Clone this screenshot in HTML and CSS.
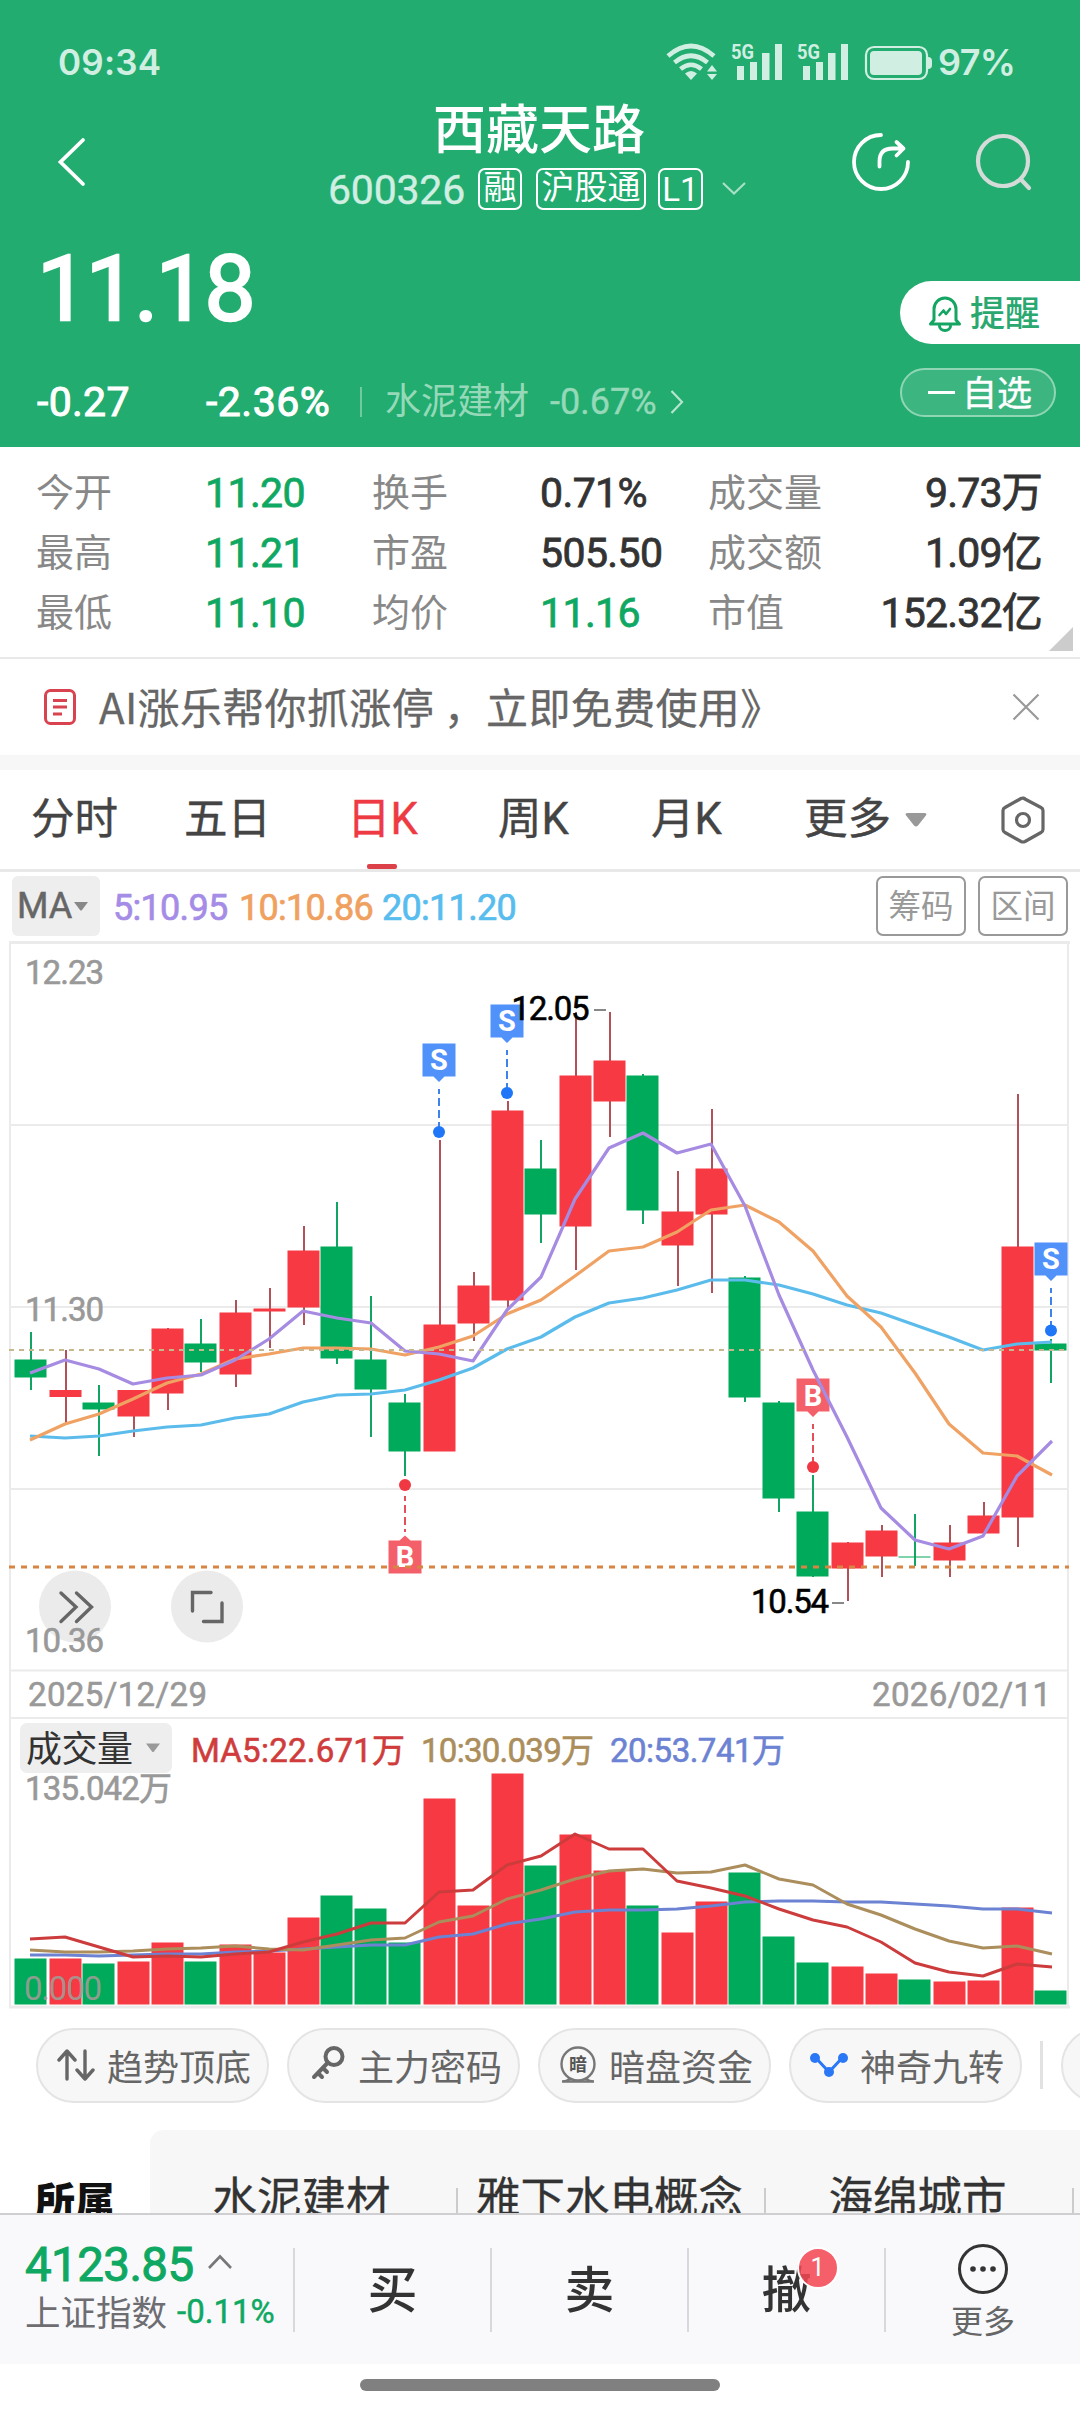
FILE: index.html
```html
<!DOCTYPE html>
<html lang="zh-CN">
<head>
<meta charset="utf-8">
<title>西藏天路 600326</title>
<link rel="stylesheet" href="styles.css">
</head>
<body>
<div class="app">
  <header class="hero">
    <div class="status">
      <span class="clock">09:34</span>
      <svg class="status-icons" width="270" height="44" viewBox="664 40 270 44">
        <g fill="none" stroke="#d0efe2" stroke-width="4.6">
          <path d="M668 56Q691 36 714 56"/><path d="M674.500 62.500Q691 49 707.500 62.500"/><path d="M680.500 69Q691 60.500 701.500 69"/>
        </g>
        <g fill="#d0efe2">
          <path d="M685 73.500Q691 68.500 697 73.500L691 80z"/>
          <path d="M707 71.500l5-6.500 5 6.500zM707 74h10l-5 6z"/>
          <path d="M737 66h7v14h-7zM750 62h7v18h-7zM762 53h7.500v27h-7.500zM775 44h7v36h-7z"/>
          <path d="M803 66h7v14h-7zM816 62h7v18h-7zM828 53h7.500v27h-7.500zM841 44h7v36h-7z"/>
          <rect x="870" y="51" width="52" height="24" rx="4"/>
          <path d="M928 57q4 0 4 4v4q0 4-4 4z"/>
          <text x="731" y="58.500" class="fiveg" textLength="23" lengthAdjust="spacingAndGlyphs">5G</text>
          <text x="797" y="58.500" class="fiveg" textLength="23" lengthAdjust="spacingAndGlyphs">5G</text>
        </g>
        <rect x="866" y="47" width="61" height="32" rx="8" fill="none" stroke="#d0efe2" stroke-width="2.200"/>
      </svg>
      <span class="battery">97%</span>
    </div>
    <div class="nav">
      <svg class="back" width="32" height="52" viewBox="56 136 32 52"><path d="M83 140L60.500 162 83 184" fill="none" stroke="#fff" stroke-width="3.800" stroke-linecap="round"/></svg>
      <div class="title-box">
        <h1>西藏天路</h1>
        <div class="code-row">
          <span class="code">600326</span><span class="tag t1">融</span><span class="tag t3">沪股通</span><span class="tag t2">L1</span>
          <svg width="26" height="16" viewBox="0 0 26 16"><path d="M2 2l11 10.500L24 2" fill="none" stroke="#a8e0c8" stroke-width="2.200"/></svg>
        </div>
      </div>
      <div class="nav-actions">
        <svg width="60" height="60" viewBox="851 132 60 60" fill="none" stroke="#fff" stroke-width="3.800" stroke-linecap="round" stroke-linejoin="round"><path d="M881 135A27 27 0 1 0 908 162"/><path d="M879.500 166.500v-5q0-13 13-13h11M896.500 142l7 6.500-7 7"/></svg>
        <svg width="60" height="60" viewBox="973 132 60 60" fill="none" stroke="#d4dbd8" stroke-width="4.200" stroke-linecap="round"><circle cx="1003" cy="161" r="25"/><path d="M1021 179.500l8 8.500"/></svg>
      </div>
    </div>
    <div class="quote">
      <div class="price">11.18</div>
      <div class="remind">
        <svg width="34" height="38" viewBox="0 0 34 38" fill="none" stroke="#15a562" stroke-width="3" stroke-linecap="round" stroke-linejoin="round"><path d="M6 26V15a11 11 0 0 1 22 0v11l3.500 4h-29z"/><path d="M11.500 32a5.500 4.500 0 0 0 11 0"/><path d="M11.500 21l4-4.500 2.500 3.500 4-5" stroke-width="2.600"/></svg>
        <span>提醒</span>
      </div>
    </div>
    <div class="change">
      <span class="diff">-0.27</span><span class="pct">-2.36%</span><i class="bar"></i>
      <span class="sector">水泥建材</span><span class="sector-pct">-0.67%</span>
      <svg width="16" height="26" viewBox="0 0 16 26"><path d="M2.500 2l10.500 11L2.500 24" fill="none" stroke="#b5e4cf" stroke-width="2.200"/></svg>
      <div class="fav"><i></i><span>自选</span></div>
    </div>
  </header>

  <section class="stats">
    <span>今开</span><b class="g">11.20</b><span>换手</span><b>0.71%</b><span>成交量</span><b class="r">9.73万</b>
    <span>最高</span><b class="g">11.21</b><span>市盈</span><b>505.50</b><span>成交额</span><b class="r">1.09亿</b>
    <span>最低</span><b class="g">11.10</b><span>均价</span><b class="g">11.16</b><span>市值</span><b class="r">152.32亿</b>
    <svg class="corner" width="24" height="24"><path d="M24 0v24H0z" fill="#ccc"/></svg>
  </section>

  <section class="notice">
    <svg width="34" height="38" viewBox="43 688 34 38" fill="none" stroke="#d8434f" stroke-width="3"><rect x="45.500" y="690.500" width="29" height="33" rx="5"/><path d="M53 700.500h14M53 707h14M53 714h9" stroke-width="3.200"/></svg>
    <span>AI涨乐帮你抓涨停 ，立即免费使用》</span>
    <svg class="close" width="28" height="28" viewBox="0 0 28 28"><path d="M1.500 1.500l25 25M26.500 1.500l-25 25" stroke="#999" stroke-width="2.200"/></svg>
  </section>

  <nav class="tabs">
    <span>分时</span><span>五日</span><span class="on">日K</span><span>周K</span><span>月K</span><span class="more">更多<svg width="22" height="14"><path d="M3 0h16q4 0 1.500 3L13 12.500q-2 2-4 0L1.500 3Q-1 0 3 0z" fill="#999"/></svg></span>
    <svg class="hex" width="46" height="50" viewBox="0 0 46 50" fill="none" stroke="#666" stroke-width="3.200" stroke-linejoin="round"><path d="M23 3L41 12.500q2 1 2 3v19q0 2-2 3L25 46.500q-2 1-4 0L5 37.500q-2-1-2-3v-19q0-2 2-3L21 3.500q2-1 4 0"/><circle cx="23" cy="25" r="6.500"/></svg>
  </nav>

  <section class="ma">
    <span class="ma-pill">MA<svg width="14" height="9"><path d="M0 0h14L8 8q-1 1-2 0z" fill="#888"/></svg></span>
    <span class="m5">5:10.95</span><span class="m10">10:10.86</span><span class="m20">20:11.20</span>
    <button>筹码</button><button>区间</button>
  </section>

  <svg class="chart" width="1080" height="1076" viewBox="0 940 1080 1076">
    <!-- frame and grid -->
    <g fill="#ebebeb">
      <path d="M9 941h1061v3H9zM9 1124h1059v2H9zM9 1306h1059v2H9zM9 1488h1059v2H9zM9 1669.500h1059v2H9zM9 1717h1059v2H9zM9 2005.500h1061v3H9z"/>
      <path d="M9 941h2v1067H9zM1067 941h2v1067h-2z"/>
    </g>
    <!-- price axis and round buttons -->
    <g fill="#ebebeb"><circle cx="75" cy="1606.500" r="36"/><circle cx="207" cy="1606.500" r="36"/></g>
    <g fill="none" stroke="#666" stroke-width="3.400" stroke-linecap="round">
      <path d="M61 1593l15 14-15 14.500M76.500 1593l15 14-15 14.500"/>
      <path d="M192.500 1611v-18.500H211M222 1603v18.500h-18.500"/>
    </g>
    <g class="axis" fill="#999" stroke="#999">
      <text x="25" y="984" textLength="79">12.23</text>
      <text x="25" y="1321" textLength="79">11.30</text>
      <text x="25" y="1652" textLength="79">10.36</text>
      <text x="28" y="1706" textLength="179">2025/12/29</text>
      <text x="872" y="1706" textLength="179">2026/02/11</text>
    </g>
    <!-- wicks -->
    <path stroke="#b05257" stroke-width="2" d="M66 1350v75M134 1390v47M168 1328v82M236 1300v87M270 1288v60M304 1226v99M440 1140v190M474 1272v69M508 1101v208M576 1012v258M610 1012v125M678 1171v115M712 1109v184M848 1542v59M882 1525v52M950 1525v52M984 1502v31M1018 1094v453"/>
    <path stroke="#12a462" stroke-width="2" d="M31 1332v58M99 1385v71M201 1319v53M337 1202v162M371 1296v141M405 1394v82M541 1140v103M643 1074v150M779 1401v111M745 1276v126M813 1475v102M915 1514v52M1051 1339v44"/>
    <!-- candle bodies -->
    <path fill="#f63942" d="M49.500 1390h32v7h-32zM117.500 1390h32v26.500h-32zM151.500 1328.500h32v65h-32zM219.500 1312.500h32v62h-32zM253.500 1308.500h32v3h-32zM287.500 1250.500h32v57h-32zM423.500 1324.500h32v127h-32zM457.500 1285.500h32v38h-32zM491.500 1110.500h32v190h-32zM559.500 1075.500h32v151h-32zM593.500 1060.500h32v41h-32zM661.500 1211.500h32v34h-32zM695.500 1168.500h32v46h-32zM831.500 1542.500h32v26h-32zM865.500 1530.500h32v26h-32zM933.500 1542.500h32v18h-32zM967.500 1515.500h32v18h-32zM1001.500 1246.500h32v271h-32z"/>
    <path fill="#00aa5b" d="M14.500 1359.500h32v18h-32zM82.500 1402.500h32v7h-32zM184.500 1343.500h32v19h-32zM320.500 1246.500h32v112h-32zM354.500 1359.500h32v30h-32zM388.500 1402.500h32v49h-32zM524.500 1168.500h32v46h-32zM626.500 1075.500h32v135h-32zM728.500 1277.500h32v120h-32zM762.500 1402.500h32v96h-32zM796.500 1511.500h32v65h-32zM898.500 1556.500h32v1h-32zM1034.500 1343.500h32v7h-32z"/>
    <!-- trade markers -->
    <g fill="#5191fa">
      <path d="M422.500 1043.500h33v33h-11l-5.500 5.500-5.500-5.500h-11zM490.500 1004.500h33v33h-11l-5.500 5.500-5.500-5.500h-11zM1034.500 1242.500h33v33h-11l-5.500 5.500-5.500-5.500h-11z"/>
    </g>
    <g fill="#f46069"><path d="M388.500 1540.500h11l5.500-5 5.500 5h11v33h-33zM796.500 1378.500h33v33h-11l-5.500 5.500-5.500-5.500h-11z"/></g>
    <g class="mark" fill="#fff" text-anchor="middle">
      <text x="439" y="1070">S</text><text x="507" y="1031">S</text><text x="1051" y="1269">S</text><text x="405" y="1567">B</text><text x="813" y="1405.500">B</text>
    </g>
    <g fill="none" stroke-width="2" stroke-dasharray="8 4" stroke-dashoffset="3">
      <path stroke="#3f82ea" d="M439 1089v38M507 1050v38M1051 1288v38"/>
      <path stroke="#e2505c" d="M405 1496v36M813 1424v38"/>
    </g>
    <g fill="#1f76f7"><circle cx="439" cy="1132" r="6"/><circle cx="507" cy="1093" r="6"/><circle cx="1051" cy="1330.500" r="6"/></g>
    <g fill="#f03843"><circle cx="405" cy="1485" r="6"/><circle cx="813" cy="1467" r="6"/></g>
    <!-- price averages -->
    <g fill="none" stroke-width="3.200" stroke-linejoin="round">
      <path stroke="#5bbcec" d="M30 1436L65 1438 99 1436 133 1431 167 1427 201 1425 235 1418 269 1414 303 1402 337 1395 371 1394 405 1390 439 1380 473 1368 507 1349 541 1337 575 1317 609 1303 643 1298 677 1290 711 1280 745 1280 779 1285 813 1294 847 1305 881 1313 915 1325 949 1337 983 1350 1017 1344 1052 1342"/>
      <path stroke="#efa263" d="M30 1440L65 1424 99 1414 133 1399 167 1383 201 1374 235 1359 269 1354 303 1348 337 1348 371 1349 405 1355 439 1347 473 1336 507 1314 541 1300 575 1276 609 1251 643 1247 677 1232 711 1210 745 1205 779 1222 813 1251 847 1296 881 1327 915 1373 949 1424 983 1453 1017 1456 1052 1475"/>
      <path stroke="#a68be2" d="M30 1373L65 1360 99 1369 133 1384 167 1378 201 1375 235 1360 269 1339 303 1311 337 1318 371 1323 405 1351 439 1354 473 1361 507 1310 541 1277 575 1199 609 1148 643 1133 677 1153 711 1144 745 1206 779 1295 813 1370 847 1437 881 1508 915 1540 949 1549 983 1536 1017 1476 1052 1441"/>
    </g>
    <path stroke="#c6b78e" stroke-width="2" stroke-dasharray="5 5" d="M9 1350H1069"/>
    <path stroke="#d88443" stroke-width="3" stroke-dasharray="6 6" d="M9 1567H1069"/>
    <path stroke="#888" stroke-width="2" d="M594 1010h12M832 1603h12"/>
    <g class="axis" fill="#000" stroke="#000"><text x="511.500" y="1020" textLength="78">12.05</text><text x="751" y="1613" textLength="78">10.54</text></g>
    <!-- volume -->
    <path fill="#f63942" d="M49.500 1958.500h32v46h-32zM117.500 1961.500h32v43h-32zM151.500 1942.500h32v62h-32zM219.500 1944.500h32v60h-32zM253.500 1952.500h32v52h-32zM287.500 1917.500h32v87h-32zM423.500 1798.500h32v206h-32zM457.500 1905.500h32v99h-32zM491.500 1773.500h32v231h-32zM559.500 1834.500h32v170h-32zM593.500 1870.500h32v134h-32zM661.500 1932.500h32v72h-32zM695.500 1901.500h32v103h-32zM831.500 1966.500h32v38h-32zM865.500 1973.500h32v31h-32zM933.500 1981.500h32v23h-32zM967.500 1980.500h32v24h-32zM1001.500 1907.500h32v97h-32z"/>
    <path fill="#00aa5b" d="M14.500 1958.500h32v46h-32zM82.500 1963.500h32v41h-32zM184.500 1961.500h32v43h-32zM320.500 1895.500h32v109h-32zM354.500 1908.500h32v96h-32zM388.500 1942.500h32v62h-32zM524.500 1865.500h32v139h-32zM626.500 1905.500h32v99h-32zM728.500 1872.500h32v132h-32zM762.500 1936.500h32v68h-32zM796.500 1962.500h32v42h-32zM898.500 1979.500h32v25h-32zM1034.500 1990.500h32v14h-32z"/>
    <g fill="none" stroke-width="3" stroke-linejoin="round">
      <path stroke="#6c82d2" d="M30 1955L65 1955 99 1956 133 1955 167 1954 201 1954 235 1952 269 1951 303 1949 337 1947 371 1945 405 1945 439 1937 473 1934 507 1924 541 1919 575 1912 609 1910 643 1910 677 1909 711 1906 745 1902 779 1901 813 1901 847 1902 881 1902 915 1904 949 1906 983 1909 1017 1909 1052 1913"/>
      <path stroke="#ab8e5c" d="M30 1950L65 1952 99 1952 133 1951 167 1949 201 1948 235 1946 269 1949 303 1950 337 1945 371 1940 405 1938 439 1922 473 1916 507 1899 541 1890 575 1879 609 1871 643 1869 677 1873 711 1872 745 1865 779 1879 813 1885 847 1904 881 1915 915 1929 949 1941 983 1948 1017 1946 1052 1954"/>
      <path stroke="#cc3c3c" d="M30 1939L65 1937 99 1947 133 1957 167 1956 201 1957 235 1954 269 1952 303 1942 337 1934 371 1923 405 1923 439 1892 473 1890 507 1865 541 1856 575 1834 609 1849 643 1849 677 1881 711 1888 745 1896 779 1909 813 1920 847 1927 881 1942 915 1963 949 1972 983 1976 1017 1964 1052 1967"/>
    </g>
    <rect x="20" y="1723" width="152" height="50" rx="7" fill="#eee"/>
    <text x="26" y="1761.500" class="vol-name" fill="#333" textLength="107">成交量</text>
    <path d="M146 1743.500h14l-6 8q-1 1-2 0z" fill="#999"/>
    <g class="axis">
      <text x="191" y="1761.500" fill="#d03c3c" stroke="#d03c3c" textLength="214">MA5:22.671万</text>
      <text x="421" y="1761.500" fill="#ab8e5c" stroke="#ab8e5c" textLength="173">10:30.039万</text>
      <text x="610" y="1761.500" fill="#6c82d2" stroke="#6c82d2" textLength="175">20:53.741万</text>
      <text x="25" y="1799.500" fill="#999" stroke="#999" textLength="147">135.042万</text>
      <text x="24" y="1999.500" fill="#a09c96" fill-opacity=".9" textLength="78">0.000</text>
    </g>
  </svg>

  <section class="chips">
    <span class="chip"><svg width="38" height="32" viewBox="0 0 38 32" fill="none" stroke="#666" stroke-width="3.400" stroke-linecap="round" stroke-linejoin="round"><path d="M10 30V3M2 11l8-9 8 9M28 2v28M20 21l8 9 8-9"/></svg>趋势顶底</span>
    <span class="chip"><svg class="key" width="38" height="36" viewBox="0 0 38 36" fill="none" stroke="#666" stroke-width="4" stroke-linecap="round"><circle cx="26" cy="11.500" r="8.500"/><path d="M19.500 18L6 32M10 28l4 4M15 23l4 4"/></svg>主力密码</span>
    <span class="chip"><svg width="38" height="40" viewBox="0 0 38 40" fill="none" stroke="#777" stroke-width="2.400"><circle cx="19" cy="19" r="16.500"/><path d="M3 36.500q5 0 8-3M35 36.500q-5 0-8-3M3 36.500h32"/><text x="19" y="26" text-anchor="middle" class="dark" fill="#555" stroke="none">暗</text></svg>暗盘资金</span>
    <span class="chip"><svg width="38" height="26" viewBox="0 0 38 26"><path d="M5 5l14 15L33 5" fill="none" stroke="#2a78f5" stroke-width="3"/><g fill="#2a78f5"><circle cx="5" cy="6" r="5"/><circle cx="19" cy="20" r="5"/><circle cx="33" cy="6" r="5"/></g></svg>神奇九转</span>
    <i></i>
    <span class="chip cut"></span>
  </section>

  <section class="belong">
    <b>所属</b>
    <div class="belong-list"><span class="c1">水泥建材</span><span class="c2">雅下水电概念</span><span class="c3">海绵城市</span></div>
  </section>

  <footer class="dock">
    <div class="index">
      <div class="idx-top">4123.85<svg width="26" height="16" viewBox="0 0 26 16"><path d="M2 14L13 2.500 24 14" fill="none" stroke="#777" stroke-width="2.600"/></svg></div>
      <div class="idx-sub"><span>上证指数</span><em>-0.11%</em></div>
    </div>
    <div class="act">买</div>
    <div class="act">卖</div>
    <div class="act"><span class="wd">撤<i class="badge">1</i></span></div>
    <div class="act-more">
      <svg width="52" height="52" viewBox="0 0 52 52"><circle cx="26" cy="26" r="23.500" fill="none" stroke="#333" stroke-width="3"/><g fill="#333"><circle cx="16" cy="26" r="2.800"/><circle cx="26" cy="26" r="2.800"/><circle cx="36" cy="26" r="2.800"/></g></svg>
      <span>更多</span>
    </div>
  </footer>
  <div class="home"><i></i></div>
</div>
</body>
</html>
```
FILE: styles.css
```css
* { box-sizing: border-box; }
body { margin: 0; background: #fff; }
.app {
  width: 1080px; height: 2412px; overflow: hidden;
  display: flex; flex-direction: column;
  font-family: Roboto, "Noto Sans CJK SC", sans-serif;
  color: #333; background: #fff;
}
.app > * { flex: none; }
svg { display: block; flex: none; }

/* header */
.hero { height: 447px; background: #22ac6f; color: #fff; display: flex; flex-direction: column; }
.status { height: 90px; padding: 40px 0 0 58px; display: flex; align-items: flex-start; color: #d0efe2; font: 600 35px/44px Inter, sans-serif; }
.clock { width: 606px; letter-spacing: .2px; }
.battery { padding-left: 4px; letter-spacing: -.6px; font-size: 36px; }
.fiveg { font: 700 20px Roboto, sans-serif; }
.nav { height: 130px; display: flex; position: relative; }
.back { margin: 46px 0 0 56px; }
.title-box { width: 440px; margin-left: 232px; display: flex; flex-direction: column; }
.title-box h1 { margin: 6px 0 0 113px; font: 500 53px/60px "Noto Sans CJK SC", sans-serif; white-space: nowrap; }
.code-row { display: flex; align-items: center; height: 42px; margin: 12px 0 0 8px; }
.code { width: 150px; font-size: 41px; line-height: 42px; color: #d0efe2; letter-spacing: -.2px; -webkit-text-stroke: .4px #d0efe2; padding-top: 2px; }
.tag { height: 42px; border: 2px solid #fff; border-radius: 7px; font: 400 33px/35px Roboto, "Noto Sans CJK SC", sans-serif; text-align: center; }
.t1 { width: 44px; }
.t3 { width: 110px; margin-left: 14px; }
.t2 { width: 45px; margin: 0 18px 0 12px; line-height: 40px; }
.nav-actions { display: flex; gap: 62px; margin: 42px 0 0 91px; }
.quote { height: 148px; display: flex; justify-content: space-between; }
.price { padding: 19px 0 0 37px; font: 400 91px/100px Roboto, sans-serif; letter-spacing: -2.5px; -webkit-text-stroke: 2.4px #fff; }
.remind { margin-top: 61px; width: 180px; height: 63px; background: #fff; border-radius: 32px 0 0 32px; padding-left: 28px; display: flex; align-items: center; gap: 8px; color: #2aa870; font: 500 35px/50px "Noto Sans CJK SC", sans-serif; }
.remind span { margin-top: -4px; }
.change { height: 49px; display: flex; align-items: center; padding-left: 37px; line-height: 49px; }
.diff, .pct { font-size: 41px; font-weight: 400; padding-top: 20px; -webkit-text-stroke: 1px #fff; }
.diff { width: 169px; letter-spacing: .3px; }
.pct { width: 154px; letter-spacing: .5px; }
.bar { width: 2px; height: 30px; margin-top: 19px; background: #6fcaa0; }
.sector { margin-left: 23px; width: 165px; padding-top: 19px; font-size: 36px; color: #95d9b9; }
.sector-pct { width: 119px; padding-top: 20px; font-size: 36px; color: #95d9b9; -webkit-text-stroke: .4px #95d9b9; }
.change > svg { margin-top: 19px; }
.fav { margin-left: auto; margin-right: 24px; width: 156px; height: 49px; border: 2px solid #8fd6b5; border-radius: 25px; background: #3cb581; display: flex; align-items: center; padding-left: 26px; font: 400 35px/44px "Noto Sans CJK SC", sans-serif; -webkit-text-stroke: .4px #fff; }
.fav i { width: 27px; height: 3px; background: #fff; margin-right: 7px; }
.fav span { margin-top: -4px; }

/* statistics */
.stats { position: relative; height: 212px; border-bottom: 2px solid #e9e9e9; padding: 16px 38px 0 36px; display: grid; grid-template-columns: 169px 167px 168px 168px 99px 1fr; grid-auto-rows: 60px; line-height: 60px; font-size: 38px; color: #888; white-space: nowrap; }
.stats b { font-weight: 400; font-size: 41px; letter-spacing: -.6px; color: #333; -webkit-text-stroke: .8px currentColor; }
.stats b.g { color: #0fa862; }
.stats b.r { justify-self: end; letter-spacing: -.8px; }
.corner { position: absolute; right: 7px; top: 180px; }

/* notice */
.notice { height: 111px; border-bottom: 15px solid #f7f7f7; padding: 0 40px 0 43px; display: flex; align-items: center; font: 400 42px/60px "Noto Sans CJK SC", sans-serif; letter-spacing: .35px; color: #666; -webkit-text-stroke: .3px #666; }
.notice span { margin: -3px 0 0 22px; }
.close { margin-left: auto; }

/* period tabs */
.tabs { height: 102px; border-bottom: 3px solid #e8e8e8; padding-left: 31px; display: flex; align-items: center; font-size: 43.5px; line-height: 98px; color: #444; -webkit-text-stroke: .4px currentColor; }
.tabs span { width: 153px; }
.tabs span:nth-child(2) { width: 163px; }
.tabs span:nth-child(3) { width: 151px; }
.tabs span:nth-child(4) { width: 153px; }
.tabs .on { color: #ee3a42; display: flex; flex-direction: column; position: relative; }
.tabs .on::after { content: ""; position: absolute; left: 20px; bottom: 0; width: 30px; height: 5px; border-radius: 2px; background: #dc4048; }
.tabs .more { width: 196px; display: flex; align-items: center; gap: 14px; }

/* moving averages */
.ma { height: 68px; padding: 4px 12px; display: flex; align-items: center; font-size: 36px; line-height: 60px; }
.ma-pill { width: 88px; height: 60px; border-radius: 6px; background: #eee; color: #666; display: flex; align-items: center; padding-left: 5px; gap: 2px; font-size: 36px; margin-right: 13px; -webkit-text-stroke: .5px #666; }
.m5 { width: 126px; color: #a58ce6; }
.m10 { width: 143px; color: #f0a05f; }
.m20 { color: #58bdee; }
.m5, .m10, .m20 { letter-spacing: -.7px; padding-top: 3px; -webkit-text-stroke: .7px currentColor; }
.ma button { width: 90px; height: 60px; padding: 0; background: #fff; border: 2px solid #999; border-radius: 7px; color: #999; font: 400 32.5px/50px "Noto Sans CJK SC", sans-serif; padding-bottom: 4px; }
.ma button:nth-of-type(1) { margin: 0 12px 0 auto; }

.chart { margin: 0; }
.axis { font: 400 33px Roboto, "Noto Sans CJK SC", sans-serif; stroke-width: .6px; }
.vol-name { font: 400 36px "Noto Sans CJK SC", sans-serif; }
.mark { font: 700 29px Roboto, sans-serif; }

/* tool chips */
.chips { height: 114px; padding: 12px 0 0 36px; display: flex; gap: 18px; overflow: hidden; }
.chip { flex: none; width: 233px; height: 75px; border: 2px solid #e4e4e4; border-radius: 38px; background: #f7f7f7; display: flex; align-items: center; padding: 0 0 2px 19px; gap: 12px; font: 400 36px/60px "Noto Sans CJK SC", sans-serif; color: #666; white-space: nowrap; }
.key { margin-top: -4px; }
.chips > i { width: 3px; height: 48px; margin-top: 13px; background: #e2e2e2; flex: none; }
.dark { font: 700 18px "Noto Sans CJK SC", sans-serif; }

/* related sectors */
.belong { height: 83px; display: flex; overflow: hidden; white-space: nowrap; }
.belong b { width: 150px; padding: 39px 0 0 35px; font: 900 40px/60px "Noto Sans CJK SC", sans-serif; color: #111; }
.belong-list { flex: 1; height: 140px; background: #f7f7f7; border-radius: 14px 0 0 0; display: flex; font: 400 44.5px/60px "Noto Sans CJK SC", sans-serif; -webkit-text-stroke: .3px #333; }
.belong-list span { padding: 35px 5px 0 0; text-align: center; background: linear-gradient(#ccc, #ccc) right 58px / 2px 60px no-repeat; }
.c1, .c2, .c3 { width: 308px; flex: none; }

/* dock */
.dock { height: 151px; border-top: 2px solid #cfcfd2; background: #f9f9fc; display: flex; }
.index { width: 295px; height: 84px; margin-top: 33px; border-right: 2px solid #d9d9dd; padding-left: 25px; }
.idx-top { display: flex; align-items: center; gap: 13px; margin-top: -6px; height: 46px; font: 400 47.5px/46px Roboto, sans-serif; letter-spacing: -.6px; -webkit-text-stroke: 1px #0fa862; color: #0fa862; }
.idx-top svg { margin-top: -6px; }
.idx-sub { display: flex; align-items: center; height: 40px; margin-top: 3px; font: 400 35.5px/40px "Noto Sans CJK SC", sans-serif; color: #6d6d72; white-space: nowrap; }
.idx-sub em { margin: 2px 0 0 10px; font: 400 33px/40px Roboto, sans-serif; letter-spacing: 0; -webkit-text-stroke: .5px #0fa862; color: #0fa862; }
.act { width: 197px; height: 84px; margin-top: 33px; border-right: 2px solid #d9d9dd; text-align: center; font: 500 50px/76px "Noto Sans CJK SC", sans-serif; }
.wd { position: relative; }
.badge { position: absolute; left: 35px; top: -3px; width: 42px; height: 42px; border: 2px solid #fff; border-radius: 50%; background: rgba(244, 70, 82, .86); color: #fff; font: 400 25px/38px Roboto, sans-serif; text-align: center; }
.act-more { flex: 1; padding-top: 28px; display: flex; flex-direction: column; align-items: center; font: 400 32px/44px "Noto Sans CJK SC", sans-serif; color: #666; }
.act-more span { margin-top: 2px; }
.home { height: 48px; display: flex; justify-content: center; padding-top: 15px; }
.home i { width: 360px; height: 12px; border-radius: 6px; background: #808080; }
```
